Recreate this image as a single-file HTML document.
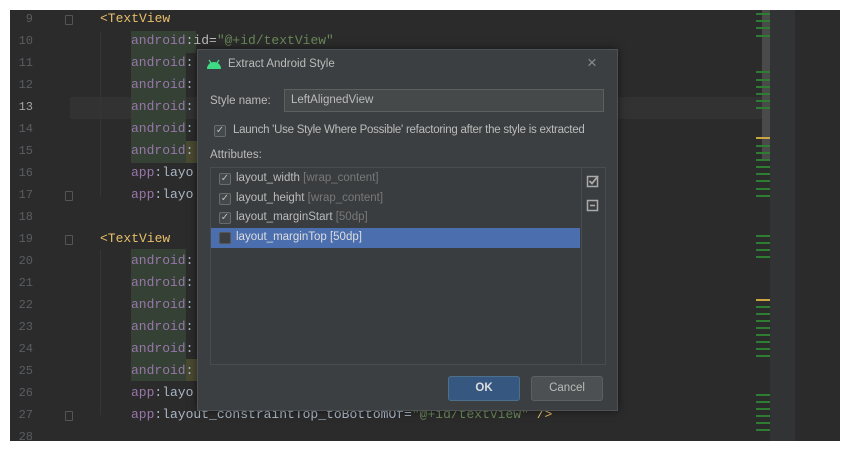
<!DOCTYPE html>
<html><head><style>
*{margin:0;padding:0;box-sizing:border-box}
body{width:850px;height:451px;background:#fff;position:relative;overflow:hidden;font-family:"Liberation Sans",sans-serif}
#ed{position:absolute;left:10px;top:10px;width:830px;height:431px;background:#2b2b2b;overflow:hidden}
.ln{position:absolute;left:0;width:23px;text-align:right;font:12px "Liberation Mono",monospace;color:#5a5d60}
.code{position:absolute;font:13px "Liberation Mono",monospace;white-space:pre;color:#a9b7c6}
.t{color:#e8bf6a}.ns{color:#9876aa}.v{color:#6a8759}.a{color:#bababa}
.gbg{position:absolute;left:121px;width:55px;height:22px;background:#344134}
.dlg{position:absolute;left:197px;top:49px;width:421px;height:362px;background:#3c3f41;border:1px solid #4e5254;box-shadow:0 0 8px rgba(0,0,0,.5);color:#bbbbbb;font-size:11.5px}
.dlg div{position:absolute;white-space:nowrap}
.cb{width:12px;height:12px;border:1px solid #6b6b6b;background:#43494a;border-radius:2px;color:#bbb;font-size:10px;line-height:10px;text-align:center}
.g{color:#787878}
.fold{position:absolute;left:55px;width:8px;height:10px;border:1px solid #555;border-radius:1px}
</style></head><body>
<div id="ed">
<div style="position:absolute;left:60px;top:87px;width:700px;height:22px;background:#323232"></div>
<div style="position:absolute;left:90px;top:22px;width:1px;height:165px;background:#353535"></div>
<div style="position:absolute;left:90px;top:240px;width:1px;height:165px;background:#353535"></div>
<div class="fold" style="top:5px"></div><div class="fold" style="top:181px"></div><div class="fold" style="top:225px"></div><div class="fold" style="top:401px"></div>
<div class="gbg" style="top:21px;width:65px"></div>
<div class="gbg" style="top:43px"></div><div class="gbg" style="top:65px"></div><div class="gbg" style="top:87px"></div><div class="gbg" style="top:109px"></div><div class="gbg" style="top:131px"></div>
<div class="gbg" style="top:239px"></div><div class="gbg" style="top:261px"></div><div class="gbg" style="top:283px"></div><div class="gbg" style="top:305px"></div><div class="gbg" style="top:327px"></div><div class="gbg" style="top:349px"></div>
<div style="position:absolute;left:176px;top:131px;width:12px;height:22px;background:#4a4a32"></div>
<div style="position:absolute;left:176px;top:349px;width:12px;height:22px;background:#4a4a32"></div>
<div class="ln" style="top:2px">9</div><div class="ln" style="top:24px">10</div><div class="ln" style="top:46px">11</div><div class="ln" style="top:68px">12</div><div class="ln" style="top:90px;color:#a4a3a3">13</div><div class="ln" style="top:112px">14</div><div class="ln" style="top:134px">15</div><div class="ln" style="top:156px">16</div><div class="ln" style="top:178px">17</div><div class="ln" style="top:200px">18</div><div class="ln" style="top:222px">19</div><div class="ln" style="top:244px">20</div><div class="ln" style="top:266px">21</div><div class="ln" style="top:288px">22</div><div class="ln" style="top:310px">23</div><div class="ln" style="top:332px">24</div><div class="ln" style="top:354px">25</div><div class="ln" style="top:376px">26</div><div class="ln" style="top:398px">27</div><div class="ln" style="top:420px">28</div>
<div class="code" style="left:90px;top:1px"><span class="t">&lt;TextView</span></div>
<div class="code" style="left:121px;top:23px"><span class="ns">android</span><span class="a">:id=</span><span class="v">"@+id/textView"</span></div>
<div class="code" style="left:121px;top:45px"><span class="ns">android</span>:</div>
<div class="code" style="left:121px;top:67px"><span class="ns">android</span>:</div>
<div class="code" style="left:121px;top:89px"><span class="ns">android</span>:</div>
<div class="code" style="left:121px;top:111px"><span class="ns">android</span>:</div>
<div class="code" style="left:121px;top:133px"><span class="ns">android</span>:</div>
<div class="code" style="left:121px;top:155px"><span class="ns">app</span>:layo</div>
<div class="code" style="left:121px;top:177px"><span class="ns">app</span>:layo</div>
<div class="code" style="left:90px;top:221px"><span class="t">&lt;TextView</span></div>
<div class="code" style="left:121px;top:243px"><span class="ns">android</span>:</div>
<div class="code" style="left:121px;top:265px"><span class="ns">android</span>:</div>
<div class="code" style="left:121px;top:287px"><span class="ns">android</span>:</div>
<div class="code" style="left:121px;top:309px"><span class="ns">android</span>:</div>
<div class="code" style="left:121px;top:331px"><span class="ns">android</span>:</div>
<div class="code" style="left:121px;top:353px"><span class="ns">android</span>:</div>
<div class="code" style="left:121px;top:375px"><span class="ns">app</span>:layo</div>
<div class="code" style="left:121px;top:397px"><span class="ns">app</span>:layout_constraintTop_toBottomOf=<span class="v">"@+id/textView"</span> <span class="t">/&gt;</span></div>
<div style="position:absolute;left:752px;top:0;width:8px;height:150px;background:#4a4a4a"></div>
<div style="position:absolute;left:760px;top:0;width:25px;height:431px;background:#313335"></div>
<svg style="position:absolute;left:746px;top:0" width="14" height="431">
<g stroke="#2e7d32" stroke-width="2">
<line x1="0" y1="4" x2="14" y2="4"/><line x1="0" y1="11" x2="14" y2="11"/><line x1="0" y1="18" x2="14" y2="18"/><line x1="0" y1="26" x2="14" y2="26"/>
<line x1="0" y1="62" x2="14" y2="62"/><line x1="0" y1="70" x2="14" y2="70"/><line x1="0" y1="77" x2="14" y2="77"/><line x1="0" y1="84" x2="14" y2="84"/><line x1="0" y1="91" x2="14" y2="91"/><line x1="0" y1="98" x2="14" y2="98"/>
<line x1="0" y1="136" x2="14" y2="136"/><line x1="0" y1="143" x2="14" y2="143"/><line x1="0" y1="150" x2="14" y2="150"/><line x1="0" y1="157" x2="14" y2="157"/><line x1="0" y1="164" x2="14" y2="164"/><line x1="0" y1="171" x2="14" y2="171"/><line x1="0" y1="179" x2="14" y2="179"/><line x1="0" y1="186" x2="14" y2="186"/>
<line x1="0" y1="226" x2="14" y2="226"/><line x1="0" y1="233" x2="14" y2="233"/><line x1="0" y1="240" x2="14" y2="240"/><line x1="0" y1="247" x2="14" y2="247"/>
<line x1="0" y1="297" x2="14" y2="297"/><line x1="0" y1="304" x2="14" y2="304"/><line x1="0" y1="311" x2="14" y2="311"/><line x1="0" y1="318" x2="14" y2="318"/><line x1="0" y1="325" x2="14" y2="325"/><line x1="0" y1="332" x2="14" y2="332"/><line x1="0" y1="339" x2="14" y2="339"/><line x1="0" y1="346" x2="14" y2="346"/>
<line x1="0" y1="385" x2="14" y2="385"/><line x1="0" y1="392" x2="14" y2="392"/><line x1="0" y1="399" x2="14" y2="399"/><line x1="0" y1="406" x2="14" y2="406"/><line x1="0" y1="413" x2="14" y2="413"/><line x1="0" y1="420" x2="14" y2="420"/>
</g>
<g stroke="#c9a642" stroke-width="2"><line x1="0" y1="128" x2="14" y2="128"/><line x1="0" y1="290" x2="14" y2="290"/></g>
</svg>
</div>
<div class="dlg">
<svg style="position:absolute;left:8px;top:9px" width="16" height="11" viewBox="0 0 16 11"><path d="M1 10 A7 7 0 0 1 15 10 Z" fill="#3ddc84"/><line x1="3" y1="1" x2="5" y2="4" stroke="#3ddc84" stroke-width="1.3"/><line x1="13" y1="1" x2="11" y2="4" stroke="#3ddc84" stroke-width="1.3"/></svg>
<div style="left:30px;top:8px">Extract Android Style</div>
<div style="left:389px;top:3px;font-size:17px;color:#8c8c8c">×</div>
<div style="left:12px;top:45px">Style name:</div>
<div style="left:86px;top:39px;width:320px;height:23px;background:#45494a;border:1px solid #5e6060;padding:4px 6px">LeftAlignedView</div>
<div class="cb" style="left:16px;top:75px">✓</div>
<div style="left:35px;top:74px;letter-spacing:-0.25px">Launch 'Use Style Where Possible' refactoring after the style is extracted</div>
<div style="left:12px;top:99px">Attributes:</div>
<div style="left:12px;top:117px;width:396px;height:198px;background:#3a3d3f;border:1px solid #4a4d4f">
<div style="left:370px;top:0;width:1px;height:196px;background:#4a4d4f"></div>
<div style="left:0;top:60px;width:369px;height:20px;background:#4b6eaf"></div>
<div class="cb" style="left:8px;top:5px">✓</div><div style="left:25px;top:4px">layout_width <span class="g">[wrap_content]</span></div>
<div class="cb" style="left:8px;top:25px">✓</div><div style="left:25px;top:24px">layout_height <span class="g">[wrap_content]</span></div>
<div class="cb" style="left:8px;top:44px">✓</div><div style="left:25px;top:43px">layout_marginStart <span class="g">[50dp]</span></div>
<div class="cb" style="left:8px;top:64px;background:#3c3f41;border-color:#555"></div><div style="left:25px;top:63px;color:#ddd">layout_marginTop [50dp]</div>
<svg style="position:absolute;left:375px;top:6px" width="14" height="40"><rect x="1.5" y="2.5" width="10" height="10" fill="none" stroke="#aaa" stroke-width="1.5"/><path d="M3.5 7 L6 9.5 L12 2" fill="none" stroke="#aaa" stroke-width="1.8"/><rect x="1.5" y="26.5" width="10" height="10" fill="none" stroke="#aaa" stroke-width="1.5"/><line x1="4" y1="31.5" x2="9" y2="31.5" stroke="#aaa" stroke-width="1.6"/></svg>
</div>
<div style="left:250px;top:326px;width:72px;height:25px;background:#365880;border:1px solid #4c708c;border-radius:3px;text-align:center;line-height:23px;font-weight:bold;color:#ddd">OK</div>
<div style="left:333px;top:326px;width:72px;height:25px;background:#4c5052;border:1px solid #5e6060;border-radius:3px;text-align:center;line-height:23px">Cancel</div>
</div>
</body></html>
